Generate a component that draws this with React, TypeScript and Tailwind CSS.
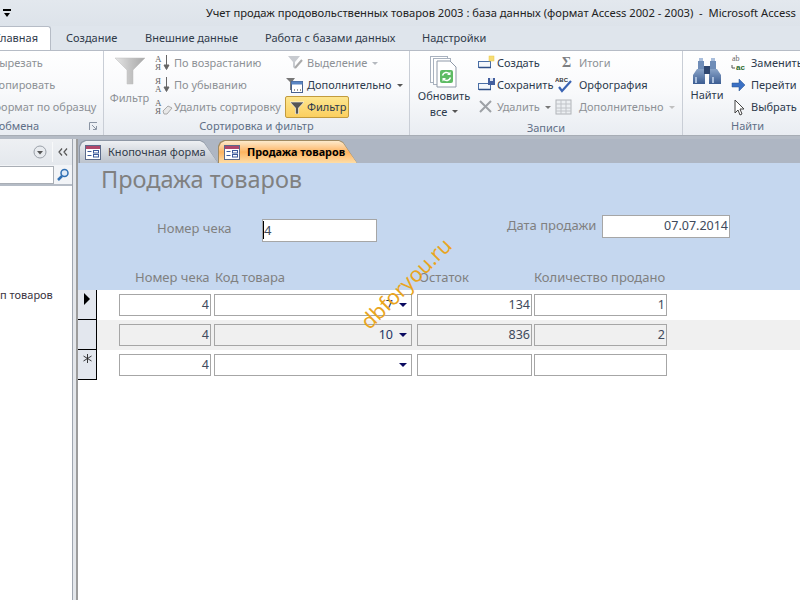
import React from "react";

const Funnel = ({ s = 32, c = "#c4c4c4" }: { s?: number; c?: string }) => (
  <svg width={s} height="28" viewBox="0 0 30 28">
    <defs>
      <linearGradient id="fg" x1="0" x2="1" y1="0" y2="0">
        <stop offset="0" stopColor="#e6e6e6" />
        <stop offset="0.5" stopColor={c} />
        <stop offset="1" stopColor="#a8a8a8" />
      </linearGradient>
    </defs>
    <path d="M0 1H30L18 13V27H12V13Z" fill="url(#fg)" stroke="#bdbdbd" strokeWidth="0.5" />
  </svg>
);

const Sort = ({ a, b, eraser }: { a: string; b: string; eraser?: boolean }) => (
  <svg width="18" height="18" viewBox="0 0 18 18">
    <text x="0" y="8" fontSize="9" fontFamily="Liberation Serif" fill="#666">{a}</text>
    <text x="0" y="16" fontSize="9" fontFamily="Liberation Serif" fill="#666">{b}</text>
    {eraser ? (
      <path d="M8 13l5-5 4 2-5 6h-3z" fill="#e8e8e8" stroke="#aaa" />
    ) : (
      <path d="M11.5 1v12M9 11l2.5 4.5 2.5-4.5z" stroke="#666" fill="#666" strokeWidth="1" />
    )}
  </svg>
);

const Small = ({ children, w = 18 }: { children: React.ReactNode; w?: number }) => (
  <svg width={w} height="18" viewBox="0 0 18 18" className="shrink-0">{children}</svg>
);

const Caret = ({ c = "#b0b0b0" }: { c?: string }) => (
  <span className="ml-[5px] inline-block h-0 w-0 border-x-[3px] border-t-[3px] border-x-transparent" style={{ borderTopColor: c }} />
);

const Row = ({ icon, text, dim, caret, iconW = 22 }: { icon?: React.ReactNode; text: string; dim?: boolean; caret?: string; iconW?: number }) => (
  <div className={`flex h-[22px] items-center whitespace-nowrap ${dim ? "text-[#8d9196]" : "text-[#2d3a4d]"}`}>
    <span className="flex shrink-0 items-center justify-start" style={{ width: iconW }}>{icon}</span>
    <span>{text}</span>
    {caret && <Caret c={caret} />}
  </div>
);

const Group = ({ w, label, children, launcher }: { w: number; label: React.ReactNode; children: React.ReactNode; launcher?: boolean }) => (
  <div className="relative flex h-full shrink-0 flex-col border-r border-[#c9ced6]" style={{ width: w }}>
    <div className="flex flex-1 pt-[1px]">{children}</div>
    <div className="flex h-[17px] items-center justify-center text-[#5f6f87]">{label}</div>
    {launcher && (
      <svg width="9" height="9" viewBox="0 0 9 9" className="absolute bottom-[4px] right-[5px]">
        <path d="M0.5 8V0.5H8M3 3l4 4M4 7.5h3.5V4" stroke="#8a94a3" fill="none" />
      </svg>
    )}
  </div>
);

const FormIcon = () => (
  <svg width="16" height="15" viewBox="0 0 16 15" className="shrink-0">
    <rect x="0.5" y="0.5" width="15" height="14" fill="#fff" stroke="#5b6a8a" />
    <rect x="1" y="1" width="14" height="3" fill="#b0476a" />
    <path d="M2.5 6.5h4M2.5 10.5h4" stroke="#3b5a9a" />
    <rect x="8.5" y="5.5" width="5" height="2.5" fill="none" stroke="#3b5a9a" />
    <rect x="8.5" y="9.5" width="5" height="2.5" fill="none" stroke="#3b5a9a" />
  </svg>
);

const Field = ({ w, v, gray, arrow, h = 22 }: { w: number; v?: string; gray?: boolean; arrow?: boolean; h?: number }) => (
  <div
    className={`flex shrink-0 items-center justify-end border border-[#a6a6a6] pr-[1px] text-[12.5px] text-[#404a5c] ${gray ? "bg-[#f0f0f0]" : "bg-white"}`}
    style={{ width: w, height: h }}
  >
    <span className={arrow ? "text-[#1f3564]" : ""}>{v}</span>
    {arrow && <span className="ml-[6px] mr-[3px] inline-block h-0 w-0 border-x-[4px] border-t-[4px] border-x-transparent border-t-[#0a0a60]" />}
  </div>
);

const DataRow = ({ gray, mark, vals }: { gray?: boolean; mark?: React.ReactNode; vals: (string | undefined)[] }) => (
  <div className={`flex h-[30px] ${gray ? "bg-[#f0f0f0]" : "bg-white"}`}>
    <div className="box-content flex h-[29px] w-[18px] shrink-0 justify-center border-r border-b border-black bg-[#e3e7ee]">{mark}</div>
    <div className="flex items-start pt-[4px]">
      <div className="ml-[22px]"><Field w={92} v={vals[0]} gray={gray} /></div>
      <div className="ml-[3px]"><Field w={198} v={vals[1]} gray={gray} arrow /></div>
      <div className="ml-[5px]"><Field w={115} v={vals[2]} gray={gray} /></div>
      <div className="ml-[2px]"><Field w={133} v={vals[3]} gray={gray} /></div>
    </div>
  </div>
);

export default function App() {
  return (
    <div className="relative flex h-[600px] w-[800px] flex-col overflow-hidden bg-white font-['Noto_Sans','DejaVu_Sans',sans-serif] text-[11px]">
      {/* title bar */}
      <div className="flex h-[26px] shrink-0 items-center bg-gradient-to-b from-[#e3e8ee] to-[#dde3ea] text-[11.2px] text-[#222]">
        <span className="ml-[3px] flex w-[203px] shrink-0 flex-col items-start">
          <span className="h-[2px] w-[8px] bg-black" />
          <span className="mt-[2px] ml-[1px] h-0 w-0 border-x-[3px] border-t-[4px] border-x-transparent border-t-black" />
        </span>
        <span className="whitespace-nowrap">Учет продаж продовольственных товаров 2003 : база данных (формат Access 2002 - 2003)&nbsp; -&nbsp; Microsoft Access</span>
      </div>
      {/* ribbon tabs */}
      <div className="flex h-[24px] shrink-0 items-end bg-[#dfe5ec] text-[11px] text-[#2f3a4a]">
        <div className="flex h-[24px] w-[51px] shrink-0 items-center justify-end rounded-tr-[3px] border-r border-t border-[#b6bcc6] bg-white pr-[12px]">Главная</div>
        <div className="ml-[15px] w-[79px] shrink-0 self-center">Создание</div>
        <div className="w-[120px] shrink-0 self-center">Внешние данные</div>
        <div className="w-[157px] shrink-0 self-center">Работа с базами данных</div>
        <div className="shrink-0 self-center">Надстройки</div>
      </div>
      {/* ribbon */}
      <div className="flex h-[86px] shrink-0 border-y border-y-[#b6bcc6] bg-gradient-to-b from-white via-[#f8f9fb] to-[#e9edf2] border-b-[#a7adb5]">
        <Group w={104} label={<span className="w-full whitespace-nowrap text-left"><span className="-ml-[37px] inline-block">Буфер обмена</span></span>} launcher>
          <div className="-ml-[7px] flex flex-col text-[#8d9196]">
            <div className="flex h-[22px] items-center whitespace-nowrap">вырезать</div>
            <div className="flex h-[22px] items-center whitespace-nowrap">копировать</div>
            <div className="flex h-[22px] items-center whitespace-nowrap">формат по образцу</div>
          </div>
        </Group>
        <Group w={306} label="Сортировка и фильтр">
          <div className="flex w-[51px] shrink-0 flex-col items-center pt-[5px] text-[#8d9196]">
            <Funnel />
            <span className="mt-[5px]">Фильтр</span>
          </div>
          <div className="flex w-[130px] shrink-0 flex-col">
            <Row dim text="По возрастанию" iconW={19} icon={<Sort a="А" b="Я" />} />
            <Row dim text="По убыванию" iconW={19} icon={<Sort a="Я" b="А" />} />
            <Row dim text="Удалить сортировку" iconW={19} icon={<Sort a="А" b="Я" eraser />} />
          </div>
          <div className="flex flex-col">
            <Row dim text="Выделение" caret="#b5b9bf" iconW={22} icon={<Small><path d="M3 2h12l-5 6v7l-2-2V8z" fill="#c8cbd0" /><path d="M10 14l7-8" stroke="#aaa" strokeWidth="2" /></Small>} />
            <Row text="Дополнительно" caret="#555" iconW={22} icon={<Small><path d="M1 2h9L7 6v8H5V6z" fill="#777" /><rect x="6.5" y="5.5" width="11" height="11" fill="#fff" stroke="#47618f" /><rect x="6.5" y="5.5" width="11" height="3" fill="#5a86c4" /><path d="M9 14h1M12 14h1M15 14h1" stroke="#333" /></Small>} />
            <div className="flex h-[22px] w-[64px] items-center rounded-[2px] border border-[#c29b3e] bg-gradient-to-b from-[#fde68f] to-[#fbcf5f] text-[#2d3a4d]">
              <span className="flex w-[21px] justify-center">
                <svg width="14" height="13" viewBox="0 0 14 13"><path d="M0 1h14L8.5 7v6h-3V7z" fill="#555" stroke="#fff" strokeWidth="0.6" /></svg>
              </span>
              <span>Фильтр</span>
            </div>
          </div>
        </Group>
        <Group w={273} label="Записи">
          <div className="flex w-[68px] shrink-0 flex-col items-center pt-[4px] text-[#2d3a4d]">
            <svg width="28" height="32" viewBox="0 0 28 32">
              <rect x="0.5" y="0.5" width="17" height="26" fill="#fff" stroke="#a9b2bf" />
              <rect x="3.5" y="2.5" width="17" height="26" fill="#fff" stroke="#a9b2bf" />
              <path d="M7 5h13l6 6v20H7z" fill="#fff" stroke="#8f99a8" />
              <rect x="10" y="14" width="13" height="13" rx="2" fill="#5dbb63" />
              <path d="M12.5 19.5a4 4 0 0 1 7-1.5M20.5 21.5a4 4 0 0 1-7 1.5" stroke="#fff" strokeWidth="1.5" fill="none" />
              <path d="M20.5 15.5v3.5h-3.5M12.5 25.5V22H16" fill="#fff" />
            </svg>
            <span className="leading-[15px]">Обновить</span>
            <span className="flex items-center leading-[17px]">все<Caret c="#555" /></span>
          </div>
          <div className="flex w-[77px] shrink-0 flex-col">
            <Row text="Создать" iconW={19} icon={<Small><rect x="0.5" y="7.5" width="12" height="6" fill="#f4f7fb" stroke="#4a6ea5" /><path d="M1 13.5h12" stroke="#2f4f86" strokeWidth="1.5" /><rect x="11" y="2" width="5" height="5" fill="#f6dc74" stroke="#e9c94a" strokeWidth="0.5" /></Small>} />
            <Row text="Сохранить" iconW={19} icon={<Small><rect x="0.5" y="7.5" width="12" height="6" fill="#f4f7fb" stroke="#4a6ea5" /><path d="M1 13.5h12" stroke="#2f4f86" strokeWidth="1.5" /><rect x="10" y="2" width="7" height="7" fill="#44609f" /><rect x="12" y="2" width="3" height="3" fill="#dfe6f2" /></Small>} />
            <Row dim text="Удалить" caret="#777" iconW={19} icon={<Small><path d="M2 3l11 11M13 3L2 14" stroke="#9da1a6" strokeWidth="2" /></Small>} />
          </div>
          <div className="flex flex-col">
            <Row dim text="Итоги" iconW={24} icon={<span className="ml-[7px] font-['Liberation_Serif',serif] text-[14px] font-bold leading-none text-[#7d7f83]">Σ</span>} />
            <Row text="Орфография" iconW={24} icon={<Small><path d="M4 11l3 4 9-10" stroke="#3a63b3" strokeWidth="2.2" fill="none" /><text x="0" y="6" fontSize="6" fontWeight="bold" fill="#333" fontFamily="Liberation Sans">ABC</text></Small>} />
            <Row dim text="Дополнительно" caret="#c0c0c0" iconW={24} icon={<Small><rect x="1" y="2" width="15" height="14" fill="#eceff2" stroke="#b0b3b8" /><path d="M1 6h15M1 10h15M1 13h15M6 2v14M11 2v14" stroke="#c0c3c8" /></Small>} />
          </div>
        </Group>
        <Group w={130} label="Найти">
          <div className="flex w-[48px] shrink-0 flex-col items-center pt-[5px] text-[#2d3a4d]">
            <svg width="28" height="28" viewBox="0 0 28 28">
              <defs>
                <linearGradient id="bn" x1="0" x2="0" y1="0" y2="1">
                  <stop offset="0" stopColor="#8aa4c8" />
                  <stop offset="1" stopColor="#3c5d92" />
                </linearGradient>
              </defs>
              <path d="M4 12h8v15H0V18zM16 12h8l4 6v9H16z" fill="url(#bn)" />
              <path d="M5 4h6v8H5zM17 4h6v8h-6z" fill="#6f8db8" />
              <rect x="11" y="9" width="6" height="8" fill="#2f4770" />
              <rect x="6" y="1" width="4" height="3" fill="#a9bedc" />
              <rect x="18" y="1" width="4" height="3" fill="#a9bedc" />
              <path d="M2 20h2v6H2zM19 20h2v6h-2z" fill="#a9bedc" />
            </svg>
            <span className="mt-[2px]">Найти</span>
          </div>
          <div className="flex flex-col">
            <Row text="Заменить" iconW={20} icon={<Small><text x="1" y="7" fontSize="8" fill="#666" fontFamily="Liberation Serif">ab</text><path d="M1 11v3h3" stroke="#555" fill="none" /><text x="5" y="16" fontSize="8" fontWeight="bold" fill="#2a6a2a" fontFamily="Liberation Sans">ac</text></Small>} />
            <Row text="Перейти" iconW={20} icon={<Small><path d="M1 7h7V3l6 6-6 6v-4H1z" fill="#3b70c4" stroke="#26508f" strokeWidth="0.5" /></Small>} />
            <Row text="Выбрать" iconW={20} icon={<Small><path d="M4 2v13l3-3 2 5 2-1-2-5h4z" fill="#fff" stroke="#444" /></Small>} />
          </div>
        </Group>
      </div>
      {/* main */}
      <div className="flex min-h-0 flex-1 border-t-[3px] border-[#b5bcc6]">
        {/* navigation */}
        <div className="flex w-[78px] shrink-0 border-r-[2px] border-[#9c9c9c]">
          <div className="flex w-[73px] shrink-0 flex-col border-r border-[#9fa6b0]">
            <div className="flex h-[26px] shrink-0 items-center justify-end bg-gradient-to-b from-[#eef0f3] to-[#e4e8ed] pr-[3px]">
              <svg width="14" height="14" viewBox="0 0 14 14"><circle cx="7" cy="7" r="6" fill="#e8ebef" stroke="#9aa0a8" /><path d="M4 6h6L7 9.5z" fill="#555" /></svg>
              <span className="ml-[5px] mr-[2px] h-[20px] w-px bg-[#f8f9fa]" />
              <svg width="12" height="10" viewBox="0 0 12 10" className="ml-[2px]"><path d="M5 1.5L2 5l3 3.5M10 1.5L7 5l3 3.5" stroke="#555" strokeWidth="1.2" fill="none" /></svg>
            </div>
            <div className="flex h-[21px] shrink-0 items-center border-b-[2px] border-[#b5bcc6] bg-[#f2f4f7]">
              <div className="h-[18px] w-[54px] border border-l-0 border-[#a9aeb5] bg-white" />
              <svg width="14" height="14" viewBox="0 0 14 14" className="ml-[2px]"><circle cx="8.5" cy="5" r="3.5" fill="#dfeaf7" stroke="#2f6fb3" strokeWidth="1.5" /><path d="M6 8l-4 4" stroke="#2f6fb3" strokeWidth="2.5" /></svg>
            </div>
            <div className="flex-1 bg-white pt-[102px] text-[#3a3340]">
              <div className="whitespace-nowrap leading-[14px]">п товаров</div>
            </div>
          </div>
          <div className="flex-1 bg-[#e4e7eb]" />
        </div>
        {/* document */}
        <div className="flex min-w-0 flex-1 flex-col">
          <div className="flex h-[24px] shrink-0 items-end bg-[#aeb6c3] pl-[1px]">
            <div className="h-[23px] w-[139px] shrink-0 bg-[#8e97a5] pl-px pt-px [clip-path:polygon(0_6px,2px_2px,6px_0,121px_0,125px_2px,139px_23px,0_23px)]">
              <div className="flex h-full items-center gap-[7px] bg-gradient-to-b from-[#eef0f3] to-[#bcc3cd] pl-[5px] text-[#333c4a] [clip-path:polygon(0_6px,2px_2px,6px_0,120px_0,124px_2px,138px_22px,0_22px)]">
                <FormIcon /><span className="whitespace-nowrap">Кнопочная форма</span>
              </div>
            </div>
            <div className="h-[23px] w-[139px] shrink-0 bg-[#a08a62] pl-px pt-px [clip-path:polygon(0_6px,2px_2px,6px_0,121px_0,125px_2px,139px_23px,0_23px)]">
              <div className="flex h-full items-center gap-[7px] bg-gradient-to-b from-[#fdeacb] via-[#fdb460] to-[#fedda6] pl-[5px] font-bold text-black [clip-path:polygon(0_6px,2px_2px,6px_0,120px_0,124px_2px,138px_22px,0_22px)]">
                <FormIcon /><span className="whitespace-nowrap text-[10.8px]">Продажа товаров</span>
              </div>
            </div>
          </div>
          <div className="h-[127px] shrink-0 bg-[#c5d7ef] text-[13px] text-[#808080]">
            <div className="pl-[23px] text-[23.5px] leading-[32px]">Продажа товаров</div>
            <div className="flex items-start pt-[20px]">
              <span className="ml-[79px] w-[105px] shrink-0 pt-[4px] leading-[18px]">Номер чека</span>
              <div className="mt-[4px] h-[23px] w-[115px] shrink-0 border border-[#a6a6a6] bg-white leading-[21px] text-[#404a5c]"><span className="border-l border-black">4</span></div>
              <span className="ml-[130px] w-[95px] shrink-0 pt-[1px] leading-[18px]">Дата продажи</span>
              <div className="flex h-[23px] w-[128px] shrink-0 items-center justify-end border border-[#a6a6a6] bg-white pr-[1px] text-[12.5px] text-[#404a5c]">07.07.2014</div>
            </div>
            <div className="mt-[26px] flex whitespace-nowrap leading-[18px]">
              <span className="ml-[57px] w-[80px]">Номер чека</span>
              <span className="w-[204px]">Код товара</span>
              <span className="w-[115px]">Остаток</span>
              <span>Количество продано</span>
            </div>
          </div>
          <DataRow mark={<span className="mt-[3px] h-0 w-0 border-y-[6px] border-l-[6px] border-y-transparent border-l-black" />} vals={["4", "7", "134", "1"]} />
          <DataRow gray vals={["4", "10", "836", "2"]} />
          <DataRow
            mark={
              <svg width="9" height="9" viewBox="0 0 9 9" className="mt-[4px]">
                <path d="M4.5 0v9M0.5 2l8 5M8.5 2l-8 5" stroke="#222" strokeWidth="0.9" />
              </svg>
            }
            vals={["4", undefined, undefined, undefined]}
          />
        </div>
      </div>
      <div className="absolute left-[347px] top-[273px] -rotate-45 whitespace-nowrap text-[21px] leading-none text-[#e9a51e]">dbforyou.ru</div>
    </div>
  );
}
